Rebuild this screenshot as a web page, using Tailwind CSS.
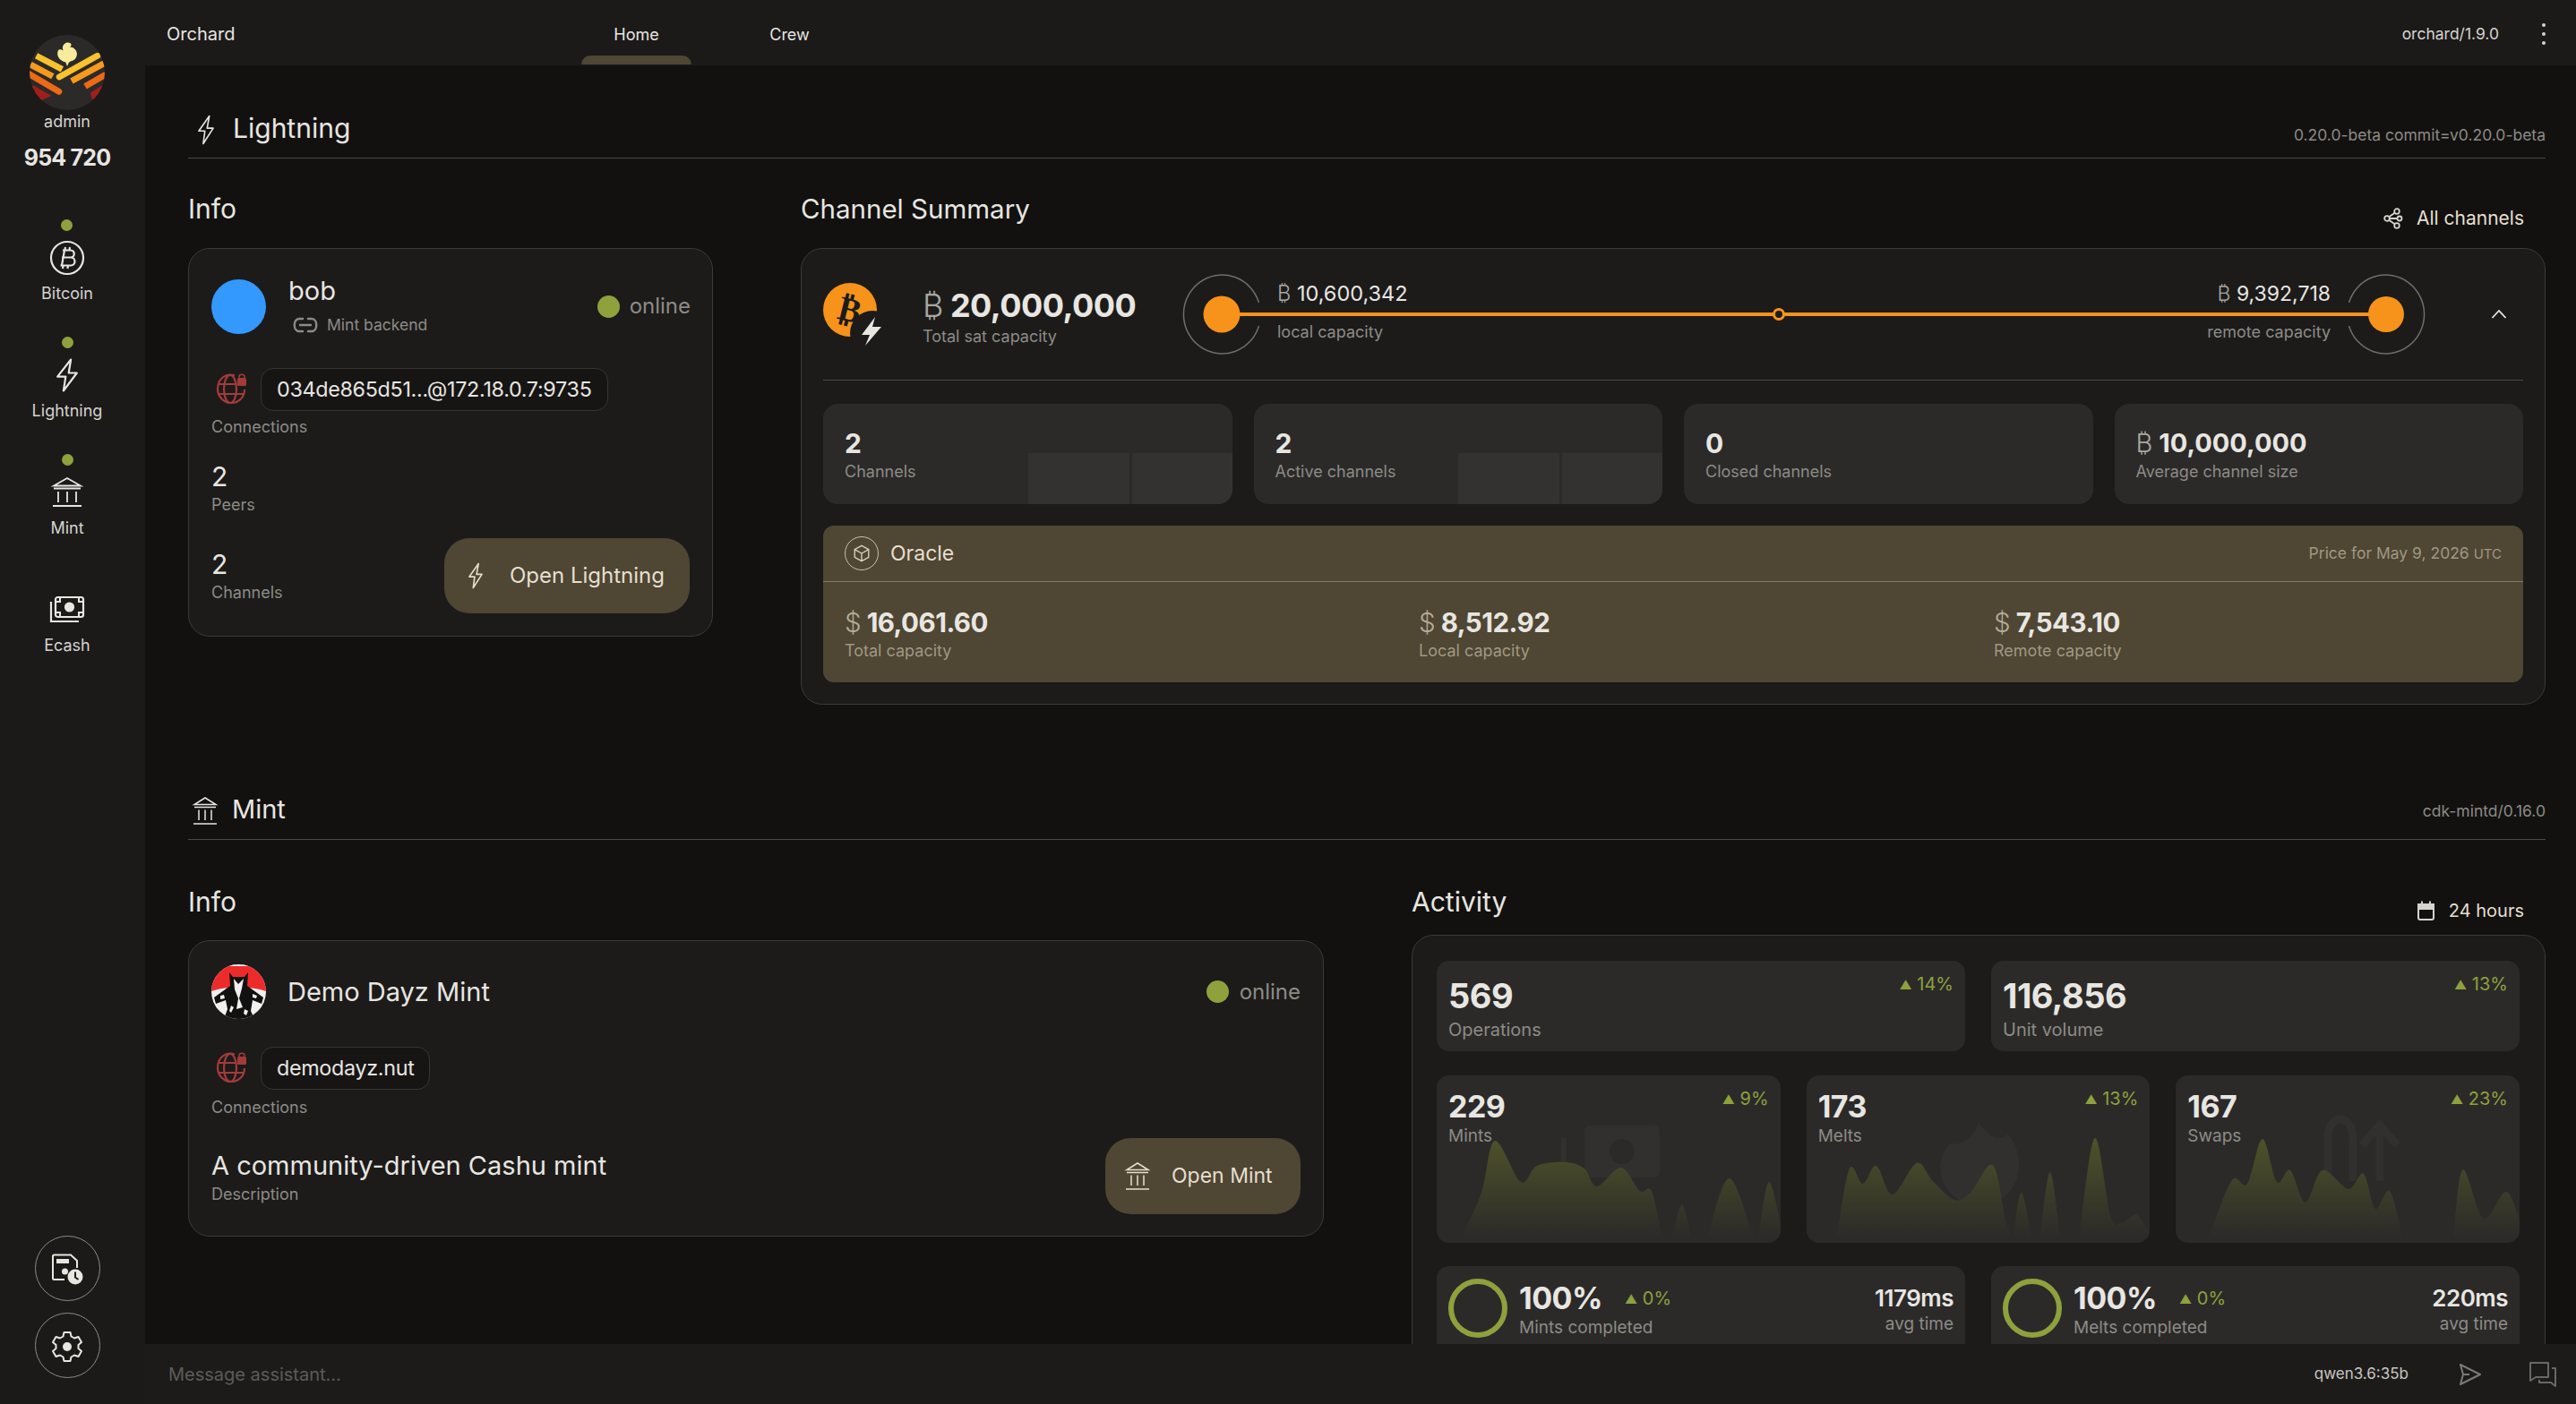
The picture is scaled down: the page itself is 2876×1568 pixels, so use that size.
<!DOCTYPE html>
<html lang="en">
<head>
<meta charset="UTF-8">
<title>Orchard</title>
<script src="https://cdn.jsdelivr.net/npm/@tailwindcss/browser@4"></script>
</head>
<body class="bg-[#121110] text-[#e8e6e1] font-[Inter,sans-serif]">
<div class="flex h-screen w-screen overflow-hidden">

  <!-- sidebar -->
  <aside class="w-[162px] shrink-0 h-full bg-[#1b1a19] flex flex-col items-center pt-[39px] pb-[29px] pr-[12px]">
    <svg class="w-[84px] h-[84px]" viewBox="97 115 256 256">
      <defs><clipPath id="logoClip"><circle cx="225" cy="243" r="128"/></clipPath></defs>
      <circle cx="225" cy="243" r="128" fill="#2b2a29"/>
      <g clip-path="url(#logoClip)" fill="none" stroke-width="21">
        <path d="M120 186 L208 232" stroke="#f9c22e"/>
        <path d="M100 216 L176 256" stroke="#f59a1d"/>
        <path d="M92 246 L197 308" stroke="#ec6a14" stroke-linecap="round"/>
        <path d="M198 258 L328 186" stroke="#f9c22e" stroke-linecap="round"/>
        <path d="M240 272 L350 212" stroke="#f59a1d"/>
        <path d="M286 290 L356 250" stroke="#ec6a14"/>
      </g>
      <g clip-path="url(#logoClip)">
        <path d="M108 286 L172 322 L136 338 L100 320 Z" fill="#a01f1a"/>
        <path d="M345 286 L304 312 L310 335 L350 320 Z" fill="#a01f1a"/>
      </g>
      <path d="M224 141 C238 139 244 150 234 156 C252 156 266 176 254 194 C246 206 234 202 230 210 L225 222 L220 208 C204 204 186 190 194 168 C198 162 206 164 212 168 C206 156 212 145 224 141 Z" fill="#f7eb9c"/>
    </svg>
    <div class="mt-[1px] text-[18px] leading-[24px] text-[#d6d4cf]">admin</div>
    <div class="mt-[12px] text-[25px] leading-[32px] font-bold tracking-[-0.8px] text-[#e8e6e1]">954 720</div>

    <nav class="mt-[53px] flex flex-col items-center gap-[37px]">
      <div class="flex flex-col items-center">
        <span class="w-[13px] h-[13px] rounded-full bg-[#8ea13c]"></span>
        <svg class="mt-[10px] w-[40px] h-[40px]" viewBox="0 0 40 40" fill="none" stroke="#e8e6e1" stroke-width="2.2"><circle cx="20" cy="20" r="18"/><path d="M15 11.5 L24 11.5 C29 11.5 29 19.5 24 19.5 L14 19.5 M24 19.5 C30 19.5 30 28.5 24 28.5 L12.5 28.5 M17 11.5 L14 28.5 M18 8 L17.4 11.5 M23 8 L22.4 11.5 M15.5 28.5 L15 32 M21 28.5 L20.4 32"/></svg>
        <span class="mt-[9px] text-[18px] leading-[22px] text-[#d6d4cf]">Bitcoin</span>
      </div>
      <div class="flex flex-col items-center">
        <span class="w-[13px] h-[13px] rounded-full bg-[#8ea13c]"></span>
        <svg class="mt-[10px] w-[40px] h-[40px]" viewBox="0 0 24 24" fill="none" stroke="#e8e6e1" stroke-width="1.3" stroke-linejoin="round"><path d="M14.5 1.5 L5.5 13 H11 L9.5 22.5 L18.5 10.5 H13 Z"/></svg>
        <span class="mt-[9px] text-[18px] leading-[22px] text-[#d6d4cf]">Lightning</span>
      </div>
      <div class="flex flex-col items-center">
        <span class="w-[13px] h-[13px] rounded-full bg-[#8ea13c]"></span>
        <svg class="mt-[10px] w-[40px] h-[40px]" viewBox="0 0 40 40" fill="none" stroke="#e8e6e1" stroke-width="1.800"><path d="M20 4 L5 12.5 H35 Z M5 15.5 H35 M10 19 V31 M20 19 V31 M30 19 V31 M4 35 H36"/></svg>
        <span class="mt-[9px] text-[18px] leading-[22px] text-[#d6d4cf]">Mint</span>
      </div>
      <div class="flex flex-col items-center">
        <span class="w-[13px] h-[13px]"></span>
        <svg class="mt-[10px] w-[40px] h-[40px]" viewBox="0 0 40 40" fill="none" stroke="#e8e6e1" stroke-width="2.2"><rect x="7" y="6" width="31" height="22" rx="2.5"/><circle cx="22.5" cy="17" r="4.5" fill="#e8e6e1"/><path d="M7 11 H12 V6 M33 6 V11 H38 M7 23 H12 V28 M33 28 V23 H38" stroke-width="2"/><path d="M2 11 V33 H33"/></svg>
        <span class="mt-[9px] text-[18px] leading-[22px] text-[#d6d4cf]">Ecash</span>
      </div>
    </nav>

    <div class="mt-auto flex flex-col gap-[13px]">
      <div class="w-[73px] h-[73px] rounded-full border border-[#8d8b86] flex items-center justify-center">
        <svg class="w-[36px] h-[36px]" viewBox="0 0 36 36" fill="none" stroke="#e8e6e1" stroke-width="2"><path d="M15 30 H3.5 C2.5 30 2 29.500 2 28.500 V4 C2 3 2.500 2.500 3.500 2.500 H22 L29 9 V17"/><rect x="6" y="7" width="14" height="5" fill="#e8e6e1" stroke="none"/><circle cx="15.500" cy="21" r="3.500" fill="#e8e6e1" stroke="none"/><circle cx="27" cy="27" r="8.500" fill="#e8e6e1" stroke="none"/><path d="M27 21.500 V27.500 L30.500 30" stroke="#1b1a19"/></svg>
      </div>
      <div class="w-[73px] h-[73px] rounded-full border border-[#8d8b86] flex items-center justify-center">
        <svg class="w-[36px] h-[36px]" viewBox="0 0 36 36" fill="none" stroke="#e8e6e1" stroke-width="2" stroke-linejoin="round"><path d="M14.500 3 H21.500 L22.500 7.500 L26 9.500 L30.500 8 L34 14 L30.500 17 V21 L34 24 L30.500 30 L26 28.500 L22.500 30.500 L21.500 35 H14.500 L13.500 30.500 L10 28.500 L5.500 30 L2 24 L5.500 21 V17 L2 14 L5.500 8 L10 9.500 L13.500 7.500 Z"/><circle cx="18" cy="19" r="5" fill="#e8e6e1" stroke="none"/></svg>
      </div>
    </div>
  </aside>

  <div class="flex-1 min-w-0 h-full flex flex-col">
    <!-- top bar -->
    <header class="h-[73px] shrink-0 bg-[#1b1a19] flex items-center pt-[3px] pl-[24px] pr-[34px]">
      <div class="w-[463px] text-[20px] text-[#e8e6e1]">Orchard</div>
      <div class="relative w-[123px] h-full -mt-[3px] pt-[3px] flex items-center justify-center text-[18px] text-[#e8e6e1]">Home
        <span class="absolute bottom-0 left-0 right-0 h-[10px] rounded-t-[12px] bg-[#4f4633]"></span>
      </div>
      <div class="ml-[48px] w-[123px] text-center text-[18px] text-[#e8e6e1]">Crew</div>
      <div class="ml-auto text-[17.5px] text-[#d6d4cf]">orchard/1.9.0</div>
      <div class="ml-[48px] flex flex-col gap-[6px]">
        <span class="w-[4px] h-[4px] rounded-full bg-[#d6d4cf]"></span>
        <span class="w-[4px] h-[4px] rounded-full bg-[#d6d4cf]"></span>
        <span class="w-[4px] h-[4px] rounded-full bg-[#d6d4cf]"></span>
      </div>
    </header>

    <!-- page -->
    <main class="flex-1 min-h-0 overflow-hidden pl-[48px] pr-[34px]">

      <section class="h-[104px] flex items-end pb-[13px] border-b border-[#4a4946]">
        <svg class="ml-[5px] w-[30px] h-[36px]" viewBox="0 0 24 29" fill="none" stroke="#e8e6e1" stroke-width="1.3" stroke-linejoin="round"><path d="M15 2 L5.500 15.500 H11 L9.500 27 L18.500 13 H13 Z"/></svg>
        <h2 class="ml-[15px] text-[30px] leading-[40px] text-[#e8e6e1]">Lightning</h2>
        <span class="ml-auto text-[17.5px] leading-[24px] text-[#8d8b86]">0.20.0-beta commit=v0.20.0-beta</span>
      </section>

      <div class="pt-[32px] grid grid-cols-[586px_1948px] gap-x-[98px]">
        <div>
          <h3 class="h-[48px] flex items-center text-[30px] text-[#e8e6e1]">Info</h3>
          <div class="mt-[20px] rounded-[24px] border border-[#3b3a37] bg-[#1c1b1a] pt-[32px] pb-[25px] px-[25px]">
            <div class="flex items-center">
              <span class="w-[61px] h-[61px] rounded-full bg-[#3399ff]"></span>
              <div class="ml-[25px]">
                <div class="text-[29px] leading-[30px] text-[#e8e6e1]">bob</div>
                <div class="mt-[12px] flex items-center h-[22px] text-[17.5px] text-[#8d8b86]">
                  <svg class="ml-[4px] w-[30px] h-[22px]" viewBox="0 0 30 22" fill="none" stroke="#8d8b86" stroke-width="2.4" stroke-linecap="round"><path d="M12 4 H8 C1 4 1 18 8 18 H12 M18 4 H22 C29 4 29 18 22 18 H18 M9 11 H21"/></svg>
                  <span class="ml-[9px]">Mint backend</span>
                </div>
              </div>
              <span class="ml-auto w-[25px] h-[25px] rounded-full bg-[#8ea13c]"></span>
              <span class="ml-[11px] -mr-[1px] text-[24px] text-[#8d8b86]">online</span>
            </div>
            <div class="mt-[37px] flex items-center">
              <svg class="ml-[5px] w-[34px] h-[36px] -mt-[2px]" viewBox="0 0 34 36" fill="none" stroke="#a33b3b" stroke-width="2.200"><path d="M21 3.600 C10 0 2 8 2 18.500 C2 27 9 34 17 34 C26 34 32 27 32 19"/><ellipse cx="16" cy="18.500" rx="7" ry="15.500"/><path d="M3 13 H22 M3 24 H31"/><rect x="24" y="6" width="10" height="9" rx="1.500" fill="#a33b3b" stroke="none"/><path d="M26 6 V4.500 C26 1.500 32 1.500 32 4.500 V6" stroke-width="1.500"/></svg>
              <div class="ml-[16px] h-[48px] rounded-[14px] border border-[#363532] bg-[#161514] flex items-center px-[17px] text-[23.3px] tracking-[-0.3px] whitespace-nowrap">034de865d51...@172.18.0.7:9735</div>
            </div>
            <div class="mt-[7px] text-[18px] leading-[22px] text-[#8d8b86]">Connections</div>
            <div class="mt-[27px] text-[30px] leading-[34px]">2</div>
            <div class="mt-[4px] text-[18px] leading-[22px] text-[#8d8b86]">Peers</div>
            <div class="mt-[26px] flex items-center justify-between">
              <div>
                <div class="text-[30px] leading-[34px]">2</div>
                <div class="mt-[4px] text-[18px] leading-[22px] text-[#8d8b86]">Channels</div>
              </div>
              <div class="w-[274px] h-[84px] rounded-[28px] bg-[#4f4633] flex items-center pl-[22px] text-[24px] text-[#e6dfcf]">
                <svg class="w-[26px] h-[36px]" viewBox="0 0 24 29" fill="none" stroke="#e6dfcf" stroke-width="1.500" stroke-linejoin="round"><path d="M15 2 L5.500 15.500 H11 L9.500 27 L18.500 13 H13 Z"/></svg>
                <span class="ml-[25px] whitespace-nowrap">Open Lightning</span>
              </div>
            </div>
          </div>
        </div>

        <div>
          <div class="flex items-center justify-between h-[48px]">
            <h3 class="text-[29.500px] text-[#e8e6e1]">Channel Summary</h3>
            <div class="mt-[22px] pr-[24px] flex items-center gap-[15px] text-[21px] text-[#e6dfcf]">
              <svg class="w-[22px] h-[24px]" viewBox="0 0 22 24" fill="none" stroke="#d6d4cf" stroke-width="1.800"><circle cx="15" cy="4" r="2.800"/><circle cx="4" cy="12" r="2.800"/><circle cx="15" cy="20" r="2.800"/><circle cx="18" cy="12" r="2.500"/><path d="M6.500 10 L13 5.500 M6.500 14 L13 18.500 M6.800 12 H15.500"/></svg>
              <span>All channels</span>
            </div>
          </div>

          <div class="mt-[20px] rounded-[24px] border border-[#3b3a37] bg-[#1c1b1a] px-[24px] pb-[24px]">
            <div class="h-[147px] border-b border-[#4a4946] flex items-center">
              <svg class="w-[66px] h-[70px] shrink-0" viewBox="0 0 66 70">
                <circle cx="30" cy="30" r="30" fill="#f7931a"/>
                <text x="30" y="43" text-anchor="middle" transform="rotate(14 30 30)" font-family="DejaVu Sans" font-weight="700" font-size="38" fill="#1c1b1a">₿</text>
                <circle cx="55" cy="56" r="25" fill="#1c1b1a"/>
                <path d="M58 38 L43 58 H52 L47 70 L65 49 H55 Z" fill="#e8e6e1"/>
              </svg>
              <div class="ml-[45px] w-[290px] shrink-0 mt-[6px]">
                <div class="text-[36px] leading-[40px] font-bold tracking-[-0.5px] whitespace-nowrap"><span class="font-light text-[#a9a7a2]">₿</span> 20,000,000</div>
                <div class="mt-[3px] text-[18px] leading-[24px] text-[#8d8b86]">Total sat capacity</div>
              </div>

              <div class="relative w-[1388px] h-[90px] flex items-center justify-between shrink-0">
                <span class="absolute left-[44px] right-[44px] top-[43px] h-[4px] bg-[#f7931a]"></span>
                <svg class="relative w-[88px] h-[90px]" viewBox="0 0 88 90" fill="none"><path d="M85.500 32 A43 44 0 1 0 85.500 58" stroke="#6f6e6b" stroke-width="1.500"/><circle cx="44" cy="45" r="20.500" fill="#f7931a"/></svg>
                <div class="relative flex-1 flex justify-between px-[18px] mb-[7px]">
                  <div>
                    <div class="text-[23.500px] leading-[30px] whitespace-nowrap"><span class="font-light text-[#a9a7a2]">₿</span> 10,600,342</div>
                    <div class="mt-[17px] text-[18px] leading-[22px] text-[#8d8b86]">local capacity</div>
                  </div>
                  <div class="text-right">
                    <div class="text-[23px] leading-[30px] whitespace-nowrap"><span class="font-light text-[#a9a7a2]">₿</span> 9,392,718</div>
                    <div class="mt-[17px] text-[18px] leading-[22px] text-[#8d8b86]">remote capacity</div>
                  </div>
                </div>
                <svg class="relative w-[88px] h-[90px]" viewBox="0 0 88 90" fill="none"><path d="M2.500 32 A43 44 0 1 1 2.500 58" stroke="#6f6e6b" stroke-width="1.500"/><circle cx="44" cy="45" r="20" fill="#f7931a"/></svg>
                <span class="absolute left-[659px] top-[38px] w-[14px] h-[14px] rounded-full border-[3px] border-[#f7931a] bg-[#1c1b1a]"></span>
              </div>

              <svg class="ml-auto mr-[18px] w-[18px] h-[12px]" viewBox="0 0 18 12" fill="none" stroke="#e8e6e1" stroke-width="1.800"><path d="M1.500 10 L9 2 L16.500 10"/></svg>
            </div>

            <div class="mt-[26px] grid grid-cols-4 gap-[24px]">
              <div class="relative h-[112px] rounded-[16px] bg-[#2b2a29] overflow-hidden px-[24px] pt-[26px]">
                <div class="text-[30px] leading-[36px] font-bold">2</div>
                <div class="mt-[3px] text-[18px] leading-[22px] text-[#8d8b86]">Channels</div>
                <div class="absolute right-0 bottom-0 flex gap-[3px]"><span class="w-[113px] h-[57px] bg-[#343230]"></span><span class="w-[112px] h-[57px] bg-[#343230]"></span></div>
              </div>
              <div class="relative h-[112px] rounded-[16px] bg-[#2b2a29] overflow-hidden px-[24px] pt-[26px]">
                <div class="text-[30px] leading-[36px] font-bold">2</div>
                <div class="mt-[3px] text-[18px] leading-[22px] text-[#8d8b86]">Active channels</div>
                <div class="absolute right-0 bottom-0 flex gap-[3px]"><span class="w-[113px] h-[57px] bg-[#343230]"></span><span class="w-[112px] h-[57px] bg-[#343230]"></span></div>
              </div>
              <div class="h-[112px] rounded-[16px] bg-[#2b2a29] px-[24px] pt-[26px]">
                <div class="text-[30px] leading-[36px] font-bold">0</div>
                <div class="mt-[3px] text-[18px] leading-[22px] text-[#8d8b86]">Closed channels</div>
              </div>
              <div class="h-[112px] rounded-[16px] bg-[#2b2a29] px-[24px] pt-[26px]">
                <div class="text-[29px] leading-[36px] font-bold"><span class="font-light text-[#a9a7a2]">₿</span> 10,000,000</div>
                <div class="mt-[3px] text-[18px] leading-[22px] text-[#8d8b86]">Average channel size</div>
              </div>
            </div>

            <div class="mt-[24px] h-[175px] rounded-[12px] bg-[#4f4633] px-[24px]">
              <div class="-mx-[24px] px-[24px] h-[63px] border-b border-[#837a66] flex items-center">
                <span class="w-[38px] h-[38px] rounded-full border border-[#c9c1ae] flex items-center justify-center">
                  <svg class="w-[22px] h-[22px]" viewBox="0 0 24 24" fill="none" stroke="#d8d0bd" stroke-width="1.500" stroke-linejoin="round"><path d="M12 2.500 L20.500 7.250 V16.750 L12 21.500 L3.500 16.750 V7.250 Z M12 12 L20.500 7.250 M12 12 V21.500 M12 12 L3.500 7.250"/></svg>
                </span>
                <span class="ml-[13px] text-[23px] text-[#e6dfcf]">Oracle</span>
                <span class="ml-auto text-[17.500px] text-[#a09883]">Price for May 9, 2026 <span class="text-[15px]">UTC</span></span>
              </div>
              <div class="grid grid-cols-[641px_642px_1fr] pt-[26px]">
                <div>
                  <div class="text-[29.500px] leading-[38px] font-bold tracking-[-0.5px]"><span class="font-light text-[#b5ad99]">$</span> 16,061.60</div>
                  <div class="mt-[2px] text-[18px] leading-[22px] text-[#a09883]">Total capacity</div>
                </div>
                <div>
                  <div class="text-[29.500px] leading-[38px] font-bold tracking-[-0.5px]"><span class="font-light text-[#b5ad99]">$</span> 8,512.92</div>
                  <div class="mt-[2px] text-[18px] leading-[22px] text-[#a09883]">Local capacity</div>
                </div>
                <div>
                  <div class="text-[29.500px] leading-[38px] font-bold tracking-[-0.5px]"><span class="font-light text-[#b5ad99]">$</span> 7,543.10</div>
                  <div class="mt-[2px] text-[18px] leading-[22px] text-[#a09883]">Remote capacity</div>
                </div>
              </div>
            </div>
          </div>
        </div>
      </div>

      <section class="mt-[97px] flex items-end pb-[13px] border-b border-[#4a4946]">
        <svg class="ml-[4px] w-[30px] h-[36px]" viewBox="0 0 30 36" fill="none" stroke="#e8e6e1" stroke-width="1.500"><path d="M15 3 L3 10.500 H27 Z M3 13.500 H27 M8 16.500 V28 M15 16.500 V28 M22 16.500 V28 M2 32 H28"/></svg>
        <h2 class="ml-[15px] text-[29px] leading-[40px] text-[#e8e6e1]">Mint</h2>
        <span class="ml-auto mb-[6px] text-[17.500px] leading-[24px] text-[#8d8b86]">cdk-mintd/0.16.0</span>
      </section>

      <div class="pt-[45px] grid grid-cols-[1268px_1266px] gap-x-[98px]">
        <div>
          <h3 class="h-[48px] flex items-center text-[30px] text-[#e8e6e1]">Info</h3>
          <div class="mt-[19px] rounded-[24px] border border-[#3b3a37] bg-[#1c1b1a] pt-[26px] pb-[24px] px-[25px]">
            <div class="flex items-center">
              <svg class="w-[61px] h-[61px]" viewBox="0 0 61 61">
                <defs><clipPath id="demoClip"><circle cx="30.500" cy="30.500" r="30.500"/></clipPath></defs>
                <g clip-path="url(#demoClip)">
                  <rect width="61" height="61" fill="#f2f0ee"/>
                  <path d="M0 0 H61 V30 C50 26 40 26 30 26 C20 26 10 26 0 30 Z" fill="#ee2b2b"/>
                  <rect x="18" width="25" height="2" fill="#f2f0ee"/>
                  <path d="M20 9 L24 14 H37 L41 9 L40 24 L47 29 L58 37 L56 44 L46 40 L44 52 L48 61 H14 L18 50 L16 40 L5 44 L3 37 L14 29 L21 24 Z" fill="#111"/>
                  <path d="M25 16 L30 22 L36 16 L34 27 L31 38 L35 48 L28 50 L30 38 L26 28 Z" fill="#f2f0ee"/>
                  <path d="M10 35 L14 34 L15 38 L10 39 Z M46 33 L51 35 L50 38 L46 37 Z M22 46 L25 48 L22 54 L20 52 Z M37 50 L41 52 L39 57 L36 55 Z" fill="#f2f0ee"/>
                </g>
              </svg>
              <span class="ml-[24px] text-[29px] text-[#e8e6e1]">Demo Dayz Mint</span>
              <span class="ml-auto w-[25px] h-[25px] rounded-full bg-[#8ea13c]"></span>
              <span class="ml-[12px] text-[24px] text-[#8d8b86]">online</span>
            </div>
            <div class="mt-[31px] flex items-center">
              <svg class="ml-[5px] w-[34px] h-[36px] -mt-[2px]" viewBox="0 0 34 36" fill="none" stroke="#a33b3b" stroke-width="2.200"><path d="M21 3.600 C10 0 2 8 2 18.500 C2 27 9 34 17 34 C26 34 32 27 32 19"/><ellipse cx="16" cy="18.500" rx="7" ry="15.500"/><path d="M3 13 H22 M3 24 H31"/><rect x="24" y="6" width="10" height="9" rx="1.500" fill="#a33b3b" stroke="none"/><path d="M26 6 V4.500 C26 1.500 32 1.500 32 4.500 V6" stroke-width="1.500"/></svg>
              <div class="ml-[16px] h-[48px] rounded-[14px] border border-[#363532] bg-[#161514] flex items-center px-[17px] text-[23.300px] tracking-[-0.3px]">demodayz.nut</div>
            </div>
            <div class="mt-[9px] text-[18px] leading-[22px] text-[#8d8b86]">Connections</div>
            <div class="mt-[23px] flex items-center justify-between">
              <div>
                <div class="text-[29px] leading-[40px] text-[#e8e6e1]">A community-driven Cashu mint</div>
                <div class="mt-[1px] text-[18px] leading-[22px] text-[#8d8b86]">Description</div>
              </div>
              <div class="w-[218px] h-[85px] rounded-[28px] bg-[#4f4633] flex items-center pl-[21px] text-[23px] text-[#e6dfcf]">
                <svg class="w-[30px] h-[36px]" viewBox="0 0 30 36" fill="none" stroke="#e6dfcf" stroke-width="1.500"><path d="M15 3 L3 10.500 H27 Z M3 13.500 H27 M8 16.500 V28 M15 16.500 V28 M22 16.500 V28 M2 32 H28"/></svg>
                <span class="ml-[23px] whitespace-nowrap">Open Mint</span>
              </div>
            </div>
          </div>
        </div>

        <div>
          <div class="flex items-center justify-between h-[48px]">
            <h3 class="text-[30px] text-[#e8e6e1]">Activity</h3>
            <div class="mt-[20px] pr-[24px] flex items-center gap-[15px] text-[20px] text-[#e6dfcf]">
              <svg class="w-[21px] h-[22px]" viewBox="0 0 21 22" fill="none" stroke="#d6d4cf" stroke-width="2"><rect x="2" y="4" width="17" height="17" rx="2"/><rect x="2" y="4" width="17" height="5" fill="#d6d4cf"/><path d="M6 0.500 V4 M15 0.500 V4"/></svg>
              <span>24 hours</span>
            </div>
          </div>

          <div class="mt-[13px] rounded-t-[24px] border border-[#3b3a37] bg-[#1c1b1a] pl-[27px] pr-[28px] pt-[28px] pb-[40px]">
            <div class="grid grid-cols-2 gap-[29px]">
              <div class="h-[101px] rounded-[14px] bg-[#2b2a29] pl-[13px] pr-[13px] pt-[16px] flex justify-between">
                <div>
                  <div class="text-[38px] leading-[46px] font-bold tracking-[-0.5px]">569</div>
                  <div class="mt-[3px] text-[20px] leading-[24px] text-[#8d8b86]">Operations</div>
                </div>
                <div class="-mt-[2px] text-[20px] leading-[24px] text-[#8ea13c]"><span class="text-[14px] align-[1px]">▲</span> 14%</div>
              </div>
              <div class="h-[101px] rounded-[14px] bg-[#2b2a29] pl-[13px] pr-[13px] pt-[16px] flex justify-between">
                <div>
                  <div class="text-[38px] leading-[46px] font-bold tracking-[-0.5px]">116,856</div>
                  <div class="mt-[3px] text-[20px] leading-[24px] text-[#8d8b86]">Unit volume</div>
                </div>
                <div class="-mt-[2px] text-[20px] leading-[24px] text-[#8ea13c]"><span class="text-[14px] align-[1px]">▲</span> 13%</div>
              </div>
            </div>

            <div class="mt-[27px] grid grid-cols-3 gap-[29px]">
              <div class="relative h-[187px] rounded-[14px] bg-[#2b2a29] overflow-hidden">
                <svg class="absolute inset-0 w-full h-full" viewBox="0 0 384 187" preserveAspectRatio="none">
                  <defs><linearGradient id="areaFill" gradientUnits="userSpaceOnUse" x1="0" y1="70" x2="0" y2="182"><stop offset="0" stop-color="#4f5229"/><stop offset="1" stop-color="#2b2a29"/></linearGradient></defs>
                  <g fill="none" stroke="#31302e" stroke-width="6"><rect x="165" y="56" width="84" height="58" rx="6" fill="#31302e" stroke="none"/><path d="M142 70 V133 H235"/></g>
                  <circle cx="207" cy="85" r="14" fill="#2b2a29"/>
                  <path class="area" fill="url(#areaFill)" data-base="182" data-segs="29,178 50,131 65,73 94,119 112,101 144,97 165,104 179,124 206,103 227,129 240,129 251,178|264,178 274,144 284,178|303,178 327,115 353,178|360,178 371,119 384,164"/>
                </svg>
                <div class="relative flex justify-between pl-[13px] pr-[13px] pt-[15px]">
                  <div>
                    <div class="text-[34px] leading-[40px] font-bold tracking-[-0.5px]">229</div>
                    <div class="mt-[2px] text-[19px] leading-[22px] text-[#8d8b86]">Mints</div>
                  </div>
                  <div class="-mt-[1px] text-[20px] leading-[24px] text-[#8ea13c]"><span class="text-[14px] align-[1px]">▲</span> 9%</div>
                </div>
              </div>
              <div class="relative h-[187px] rounded-[14px] bg-[#2b2a29] overflow-hidden">
                <svg class="absolute inset-0 w-full h-full" viewBox="0 0 384 187" preserveAspectRatio="none">
                  <path d="M192 52 C204 66 210 76 225 66 C246 90 240 130 210 142 H176 C150 130 140 100 160 76 C172 78 188 70 192 52 Z" fill="#31302e"/>
                  <path class="area" fill="url(#areaFill)" data-base="182" data-segs="34,178 48,104 63,121 78,101 96,133 123,98 141,118 165,139 183,131 208,100 222,161 228,178|231,178 240,131 251,178|261,178 272,108 283,178|305,178 322,70 340,158 353,164 369,156 384,178"/>
                </svg>
                <div class="relative flex justify-between pl-[13px] pr-[13px] pt-[15px]">
                  <div>
                    <div class="text-[34px] leading-[40px] font-bold tracking-[-0.5px]">173</div>
                    <div class="mt-[2px] text-[19px] leading-[22px] text-[#8d8b86]">Melts</div>
                  </div>
                  <div class="-mt-[1px] text-[20px] leading-[24px] text-[#8ea13c]"><span class="text-[14px] align-[1px]">▲</span> 13%</div>
                </div>
              </div>
              <div class="relative h-[187px] rounded-[14px] bg-[#2b2a29] overflow-hidden">
                <svg class="absolute inset-0 w-full h-full" viewBox="0 0 384 187" preserveAspectRatio="none">
                  <g fill="none" stroke="#31302e" stroke-width="9"><path d="M170 130 V70 C170 42 198 42 198 70 V118"/><path d="M228 118 V58 M208 78 L228 56 L248 78"/></g>
                  <path class="area" fill="url(#areaFill)" data-base="182" data-segs="39,175 63,117 80,121 97,71 113,119 128,106 145,142 164,106 193,127 210,110 223,149 239,129 252,175|311,175 321,105 344,160 369,130 384,160"/>
                </svg>
                <div class="relative flex justify-between pl-[13px] pr-[13px] pt-[15px]">
                  <div>
                    <div class="text-[34px] leading-[40px] font-bold tracking-[-0.5px]">167</div>
                    <div class="mt-[2px] text-[19px] leading-[22px] text-[#8d8b86]">Swaps</div>
                  </div>
                  <div class="-mt-[1px] text-[20px] leading-[24px] text-[#8ea13c]"><span class="text-[14px] align-[1px]">▲</span> 23%</div>
                </div>
              </div>
            </div>

            <div class="mt-[26px] grid grid-cols-2 gap-[29px]">
              <div class="h-[120px] rounded-[14px] bg-[#2b2a29] pl-[13px] pr-[13px] pt-[14px] flex">
                <span class="w-[66px] h-[66px] rounded-full border-[6px] border-[#8ea13c] shrink-0"></span>
                <div class="ml-[13px] mt-[2px]">
                  <div class="flex items-center">
                    <span class="text-[34px] leading-[40px] font-bold tracking-[-0.5px]">100%</span>
                    <span class="ml-[25px] text-[20px] text-[#8ea13c]"><span class="text-[14px] align-[1px]">▲</span> 0%</span>
                  </div>
                  <div class="mt-[1px] text-[19px] leading-[24px] text-[#8d8b86]">Mints completed</div>
                </div>
                <div class="ml-auto mt-[2px] text-right">
                  <div class="text-[26px] leading-[40px] font-semibold tracking-[-0.5px]">1179ms</div>
                  <div class="-mt-[3px] text-[19px] leading-[24px] text-[#8d8b86]">avg time</div>
                </div>
              </div>
              <div class="h-[120px] rounded-[14px] bg-[#2b2a29] pl-[13px] pr-[13px] pt-[14px] flex">
                <span class="w-[66px] h-[66px] rounded-full border-[6px] border-[#8ea13c] shrink-0"></span>
                <div class="ml-[13px] mt-[2px]">
                  <div class="flex items-center">
                    <span class="text-[34px] leading-[40px] font-bold tracking-[-0.5px]">100%</span>
                    <span class="ml-[25px] text-[20px] text-[#8ea13c]"><span class="text-[14px] align-[1px]">▲</span> 0%</span>
                  </div>
                  <div class="mt-[1px] text-[19px] leading-[24px] text-[#8d8b86]">Melts completed</div>
                </div>
                <div class="ml-auto mt-[2px] text-right">
                  <div class="text-[26px] leading-[40px] font-semibold tracking-[-0.5px]">220ms</div>
                  <div class="-mt-[3px] text-[19px] leading-[24px] text-[#8d8b86]">avg time</div>
                </div>
              </div>
            </div>
          </div>
        </div>
      </div>
    </main>

    <!-- assistant bar -->
    <footer class="h-[67px] shrink-0 bg-[#1c1b1a] flex items-center pl-[26px] pr-[21px]">
      <span class="text-[20px] text-[#5d5b58]">Message assistant...</span>
      <span class="ml-auto text-[17px] text-[#c9c7c2]">qwen3.6:35b</span>
      <svg class="ml-[56px] w-[26px] h-[26px]" viewBox="0 0 26 26" fill="none" stroke="#7c7a76" stroke-width="2" stroke-linejoin="round"><path d="M2 2 L24 13 L2 24 L5 13 Z M5 13 H12"/></svg>
      <svg class="ml-[52px] w-[32px] h-[30px]" viewBox="0 0 32 30" fill="none" stroke="#6a6865" stroke-width="2" stroke-linejoin="round"><path d="M2 2 H22 V18 H8 L2 22 Z"/><path d="M26 8 H30 V28 L25 24 H12 V21"/></svg>
    </footer>
  </div>
</div>

<script>
  // builds the smoothed sparkline areas; each | starts a new hump
  document.querySelectorAll('.area').forEach(function (el) {
    const base = +el.dataset.base;
    let d = '';
    el.dataset.segs.split('|').forEach(function (seg) {
      const p = seg.split(' ').map(function (s) { return s.split(',').map(Number); });
      d += 'M' + p[0][0] + ' ' + base + 'L' + p[0][0] + ' ' + p[0][1];
      for (let i = 0; i < p.length - 1; i++) {
        const a = p[i - 1] || p[i], b = p[i], c = p[i + 1], e = p[i + 2] || c;
        d += 'C' + (b[0] + (c[0] - a[0]) / 6) + ' ' + Math.min(base, b[1] + (c[1] - a[1]) / 6) + ' ' +
             (c[0] - (e[0] - b[0]) / 6) + ' ' + Math.min(base, c[1] - (e[1] - b[1]) / 6) + ' ' + c[0] + ' ' + c[1];
      }
      d += 'L' + p[p.length - 1][0] + ' ' + base + 'Z';
    });
    el.setAttribute('d', d);
  });
</script>
</body>
</html>
